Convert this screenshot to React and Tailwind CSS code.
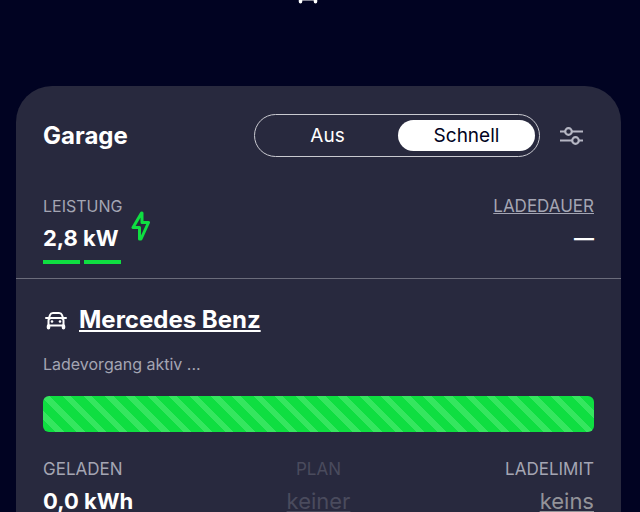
import { useState } from 'react';

const modes = ['Aus', 'Schnell'];

function CarIcon({ className }) {
  return (
    <svg viewBox="0 0 24 20" className={className} fill="none" stroke="currentColor" strokeWidth="2" strokeLinejoin="round" strokeLinecap="round" aria-hidden="true">
      <path d="M3 8h3M20 8h3" />
      <path d="M6 8l1-3q.7-2 3-2h6q2.300 0 3 2l1 3" />
      <path d="M8 8h10q2.500 0 2.500 2.500V15.500h-15v-5Q5.500 8 8 8z" />
      <path d="M5.500 16v1.700M20.500 16v1.700" strokeWidth="3.500" />
      <circle cx="9" cy="11.500" r="1.300" fill="currentColor" stroke="none" />
      <circle cx="17" cy="11.500" r="1.300" fill="currentColor" stroke="none" />
    </svg>
  );
}

function SlidersIcon() {
  return (
    <svg viewBox="0 0 24 20" className="w-6 h-5" fill="none" stroke="currentColor" strokeWidth="2.200" aria-hidden="true">
      <path d="M0 5.500h5M12 5.500h11M0 14.500h12M19 14.500h4" />
      <circle cx="8.500" cy="5.500" r="3.300" />
      <circle cx="15.500" cy="14.500" r="3.300" />
    </svg>
  );
}

function BoltIcon() {
  return (
    <svg viewBox="0 0 20 32" className="w-5 h-8 text-[#0fde41]" fill="none" stroke="currentColor" strokeWidth="3" strokeLinejoin="round" aria-hidden="true">
      <path d="M11.500 3L3 17.500h6.500V29h1.500L18.500 12.500H12V3z" />
    </svg>
  );
}

export default function App() {
  const [mode, setMode] = useState('Schnell');

  return (
    <div className="h-screen overflow-hidden bg-[#010322] pl-4 pr-[19px] text-white font-['Inter',sans-serif]">
      <header className="flex h-[86px] items-start justify-center overflow-hidden">
        <CarIcon className="-mt-4 mr-6 h-5 w-6 shrink-0" />
      </header>

      <main className="rounded-t-[36px] bg-[#28293e] pt-7 pb-10">
        <div className="flex items-center px-[27px]">
          <h1 className="flex-1 text-2xl leading-8 font-bold">Garage</h1>
          <div role="group" aria-label="Modus" className="flex w-[286px] gap-0.5 rounded-full border border-[#c9c9d0] px-1 py-[5px]">
            {modes.map((name) => (
              <button
                key={name}
                type="button"
                aria-pressed={mode === name}
                onClick={() => setMode(name)}
                className={`h-[31px] flex-1 rounded-full text-[19px] leading-6 ${mode === name ? 'bg-white text-[#010322]' : 'text-white'}`}
              >
                {name}
              </button>
            ))}
          </div>
          <button type="button" aria-label="Einstellungen" className="ml-5 mr-2.5 text-[#b5b6c3]">
            <SlidersIcon />
          </button>
        </div>

        <div className="flex items-start justify-between border-b border-[#6b6c7b] px-[27px] pt-[35px] pb-3.5">
          <div className="flex items-start gap-1">
            <div>
              <div className="text-base leading-7 text-[#a4a5b3]">LEISTUNG</div>
              <div className="text-[22px] leading-9 font-bold">2,8 kW</div>
              <div className="mt-1 flex gap-1">
                <span className="h-1 w-[37px] bg-[#0fde41]" />
                <span className="h-1 w-[37px] bg-[#0fde41]" />
              </div>
            </div>
            <div className="pt-[18px] pl-1">
              <BoltIcon />
            </div>
          </div>
          <div className="flex flex-col items-end">
            <a href="#ladedauer" className="text-[17px] leading-7 text-[#a4a5b3] underline">LADEDAUER</a>
            <div className="text-xl leading-9 font-bold">—</div>
          </div>
        </div>

        <section className="px-[27px] pt-[25px]">
          <h2 className="flex items-center gap-3 text-2xl leading-8 font-bold">
            <CarIcon className="h-5 w-6" />
            <a href="#fahrzeug" className="underline">Mercedes Benz</a>
          </h2>
          <p className="mt-4 text-base leading-6 text-[#a4a5b3]">Ladevorgang aktiv ...</p>
          <div
            role="progressbar"
            aria-label="Ladezustand"
            className="mt-5 h-9 rounded-md bg-[#0fde41] bg-[repeating-linear-gradient(45deg,#0fde41_0px,#0fde41_9px,#35e65f_9px,#35e65f_15px)]"
          />
          <div className="mt-[23px] grid grid-cols-3">
            <div>
              <div className="text-[17px] leading-7 text-[#a4a5b3]">GELADEN</div>
              <div className="text-[22px] leading-9 font-bold">0,0 kWh</div>
            </div>
            <div className="flex flex-col items-center text-[#4a4b5d]">
              <div className="text-[17px] leading-7">PLAN</div>
              <a href="#plan" className="text-[22px] leading-9 underline">keiner</a>
            </div>
            <div className="flex flex-col items-end">
              <div className="text-[17px] leading-7 text-[#a4a5b3]">LADELIMIT</div>
              <a href="#limit" className="text-[22px] leading-9 text-[#939399] underline">keins</a>
            </div>
          </div>
        </section>
      </main>
    </div>
  );
}
